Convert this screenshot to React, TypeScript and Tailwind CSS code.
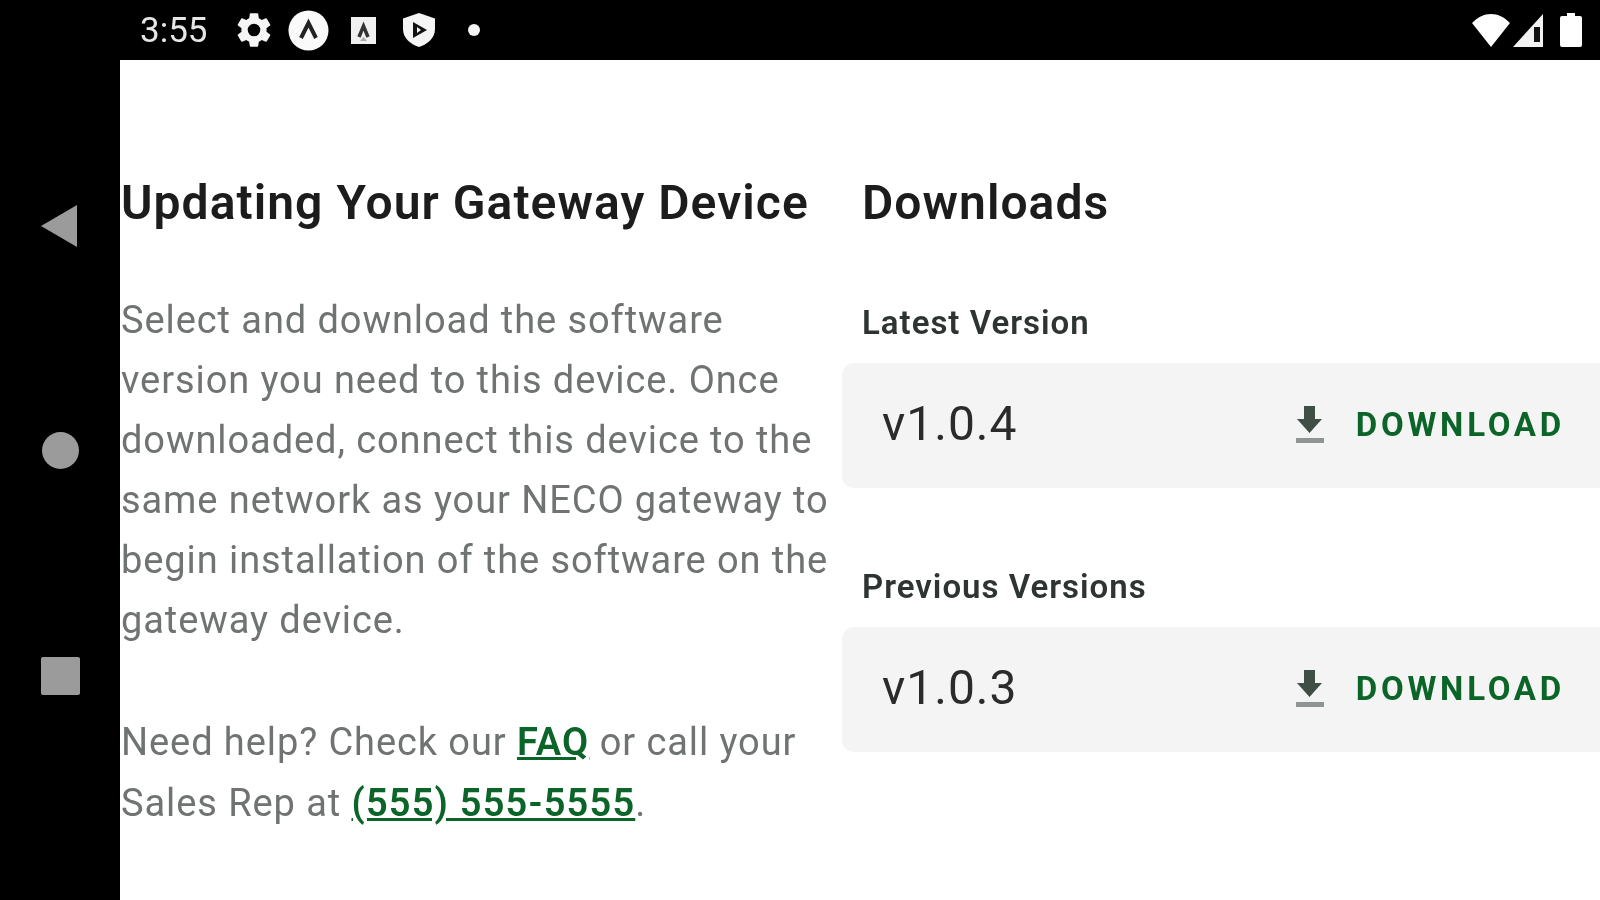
const roboto = "font-['Roboto',sans-serif]";

function StatusIcons() {
    return (
        <div className="flex items-center">
            {/* settings */}
            <svg width="42" height="42" viewBox="0 0 24 24" fill="#f5f5f5" className="ml-[25px]">
                <path d="M19.14 12.94c.04-.3.06-.61.06-.94s-.02-.64-.07-.94l2.03-1.58a.49.49 0 0 0 .12-.61l-1.92-3.32a.49.49 0 0 0-.59-.22l-2.39.96a7 7 0 0 0-1.62-.94l-.36-2.54a.48.48 0 0 0-.48-.41h-3.84a.48.48 0 0 0-.47.41l-.36 2.54c-.59.24-1.13.57-1.62.94l-2.39-.96a.49.49 0 0 0-.59.22L2.74 8.87a.48.48 0 0 0 .12.61l2.03 1.58c-.05.3-.09.63-.09.94s.02.64.07.94l-2.03 1.58a.49.49 0 0 0-.12.61l1.92 3.32c.12.22.37.29.59.22l2.39-.96c.5.38 1.03.7 1.62.94l.36 2.54c.05.24.24.41.48.41h3.84c.24 0 .44-.17.47-.41l.36-2.54c.59-.24 1.13-.56 1.62-.94l2.39.96c.22.08.47 0 .59-.22l1.92-3.32a.48.48 0 0 0-.12-.61zM12 15.6A3.6 3.6 0 1 1 12 8.4a3.6 3.6 0 0 1 0 7.2z" />
            </svg>
            {/* round app icon */}
            <svg width="41" height="41" viewBox="0 0 41 41" className="ml-[13px]">
                <circle cx="20.5" cy="20.5" r="20" fill="#fafafa" />
                <path d="M13 28 L20.500 13 L28 28" fill="none" stroke="#222" strokeWidth="4" />
            </svg>
            {/* square app icon */}
            <svg width="25" height="27" viewBox="0 0 25 27" className="ml-[22px]">
                <rect width="25" height="27" fill="#f0f0f0" />
                <path d="M8 20 L12.500 9 L17 20" fill="none" stroke="#333" strokeWidth="3.5" />
                <path d="M9 24 L16 24 L12.500 20z" fill="#aaa" />
            </svg>
            {/* play protect */}
            <svg width="32" height="34" viewBox="0 0 32 34" className="ml-[27px]">
                <path d="M16 0 L32 5.500 V16 C32 25 25 31 16 34 C7 31 0 25 0 16 V5.500 Z" fill="#f5f5f5" />
                <path d="M10 9 L24 17 L10 25 Z" fill="#111" />
                <path d="M14 14 L18 17 L14 20 Z" fill="#f5f5f5" />
            </svg>
            <div className="w-[12px] h-[12px] rounded-full bg-[#f5f5f5] ml-[33px]" />
        </div>
    );
}

function SystemIcons() {
    return (
        <div className="flex items-center mr-[18px]">
            <svg width="38" height="33" viewBox="0 0 38 33">
                <path d="M0 9 C6 3 12 0 19 0 C26 0 32 3 38 9 L19 33 Z" fill="#fff" />
            </svg>
            <svg width="30" height="33" viewBox="0 0 30 33" className="ml-[3px]">
                <path d="M0 33 L30 0 V33 Z" fill="#f2f2f2" />
                <rect x="21" y="13" width="6" height="15" fill="#111" />
            </svg>
            <svg width="22" height="34" viewBox="0 0 22 34" className="ml-[17px]">
                <path d="M7 0 H15 V3 H20 Q22 3 22 5 V32 Q22 34 20 34 H2 Q0 34 0 32 V5 Q0 3 2 3 H7 Z" fill="#fff" />
            </svg>
        </div>
    );
}

function VersionCard({ version }: { version: string }) {
    return (
        <div className="h-[125px] bg-[#f4f4f4] rounded-l-[12px] flex items-center justify-between pl-10 pr-[35px]">
            <span className={`${roboto} text-[48px] leading-none tracking-[1px] text-[#2b2b2b] -mt-[4px]`}>{version}</span>
            <div className="flex items-center gap-[31px] -mt-[2px]">
                <svg width="30" height="38" viewBox="0 0 30 38">
                    <path d="M9 0 H20 V13 H27 L14.500 27 L2 13 H9 Z" fill="#3f4f45" />
                    <rect x="1" y="32" width="28" height="5" fill="#8f9691" />
                </svg>
                <span className={`${roboto} text-[33px] leading-none font-bold tracking-[3.75px] text-[#0b6428]`}>DOWNLOAD</span>
            </div>
        </div>
    );
}

export default function App() {
    return (
        <div className={`w-[1600px] h-[900px] overflow-hidden flex flex-col bg-white blur-[0.6px] ${roboto}`}>
            {/* Status bar */}
            <div className="h-[60px] shrink-0 bg-black flex items-center justify-between pl-[140px]">
                <div className="flex items-center">
                    <span className="text-[35px] leading-none text-[#e6e6e6] mt-[1px]">3:55</span>
                    <StatusIcons />
                </div>
                <SystemIcons />
            </div>

            <div className="flex-1 flex">
                {/* Nav bar */}
                <div className="w-[120px] shrink-0 bg-black flex flex-col items-center pt-[145px] gap-[185px]">
                    <svg width="36" height="42" viewBox="0 0 36 42" className="-ml-[3px]">
                        <path d="M36 0 V42 L0 21 Z" fill="#9b9b9b" />
                    </svg>
                    <div className="w-[37px] h-[37px] rounded-full bg-[#9b9b9b]" />
                    <div className="w-[39px] h-[38px] rounded-[2px] bg-[#9b9b9b] mt-[3px]" />
                </div>

                {/* Main */}
                <div className="flex-1 flex pt-[114px]">
                    <div className="w-[722px] shrink-0 pl-[1px]">
                        <h1 className="text-[48px] leading-[58px] font-semibold tracking-[1.05px] text-[#1c1c1c]">Updating Your Gateway Device</h1>
                        <p className="mt-[58px] text-[38px] leading-[60px] tracking-[0.92px] text-[#6f7371]">
                            Select and download the software version you need to this device. Once downloaded, connect this device to the same network as your NECO gateway to begin installation of the software on the gateway device.
                        </p>
                        <p className="mt-[62px] text-[38px] leading-[61px] tracking-[0.92px] text-[#6f7371]">
                            Need help? Check our <a className="font-semibold tracking-[1.2px] text-[#0b6428] underline">FAQ</a> or call your Sales Rep at <a className="font-semibold tracking-[1.2px] text-[#0b6428] underline">(555) 555-5555</a>.
                        </p>
                    </div>
                    <div className="flex-1 min-w-0">
                        <h2 className="pl-[20px] text-[48px] leading-[58px] font-semibold tracking-[1.05px] text-[#1c1c1c]">Downloads</h2>
                        <h3 className="pl-[20px] mt-[69px] text-[33px] leading-[44px] font-semibold tracking-[1px] text-[#2e3431]">Latest Version</h3>
                        <div className="mt-[18px]">
                            <VersionCard version="v1.0.4" />
                        </div>
                        <h3 className="pl-[20px] mt-[77px] text-[33px] leading-[44px] font-semibold tracking-[1px] text-[#2e3431]">Previous Versions</h3>
                        <div className="mt-[18px]">
                            <VersionCard version="v1.0.3" />
                        </div>
                    </div>
                </div>
            </div>
        </div>
    );
}
